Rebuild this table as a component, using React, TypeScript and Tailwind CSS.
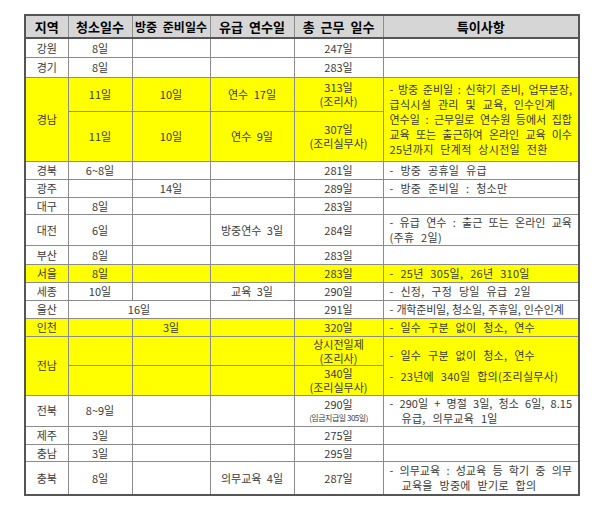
import React from "react";

const td = "border border-[#8c8c8c] text-center align-middle p-0 [word-spacing:3px]";
const y = "bg-[#ffff00]";

type Line = { t: string; j?: boolean; pl?: boolean; tight?: boolean };

function Note({ lines, lh = "leading-[15px]" }: { lines: Line[]; lh?: string }) {
  return (
    <div className={"px-[6px] " + lh}>
      {lines.map((l, i) => (
        <div
          key={i}
          className={
            (l.j
              ? "text-justify [text-align-last:justify] [word-spacing:0px] "
              : l.tight
              ? "text-left [word-spacing:1px] tracking-[-0.2px] "
              : "text-left [word-spacing:4px] tracking-[0.3px] ") +
            (l.pl ? "pl-[12px] " : "") +
            "whitespace-nowrap"
          }
        >
          {l.t}
        </div>
      ))}
    </div>
  );
}

export default function App() {
  return (
    <div
      className="w-[600px] h-[512px] bg-white pl-[24px] pt-[14px] text-[11px] text-[#3a3a3a]"
      style={{ fontFamily: '"Noto Sans CJK KR", "Noto Sans", sans-serif' }}
    >
      <table className="table-fixed border-collapse border-2 border-[#555] w-[554px]">
        <colgroup>
          <col className="w-[43px]" />
          <col className="w-[64px]" />
          <col className="w-[78px]" />
          <col className="w-[84px]" />
          <col className="w-[89px]" />
          <col className="w-[196px]" />
        </colgroup>
        <thead>
          <tr className="h-[23px] bg-[#d6d6d6] text-[13px] font-bold text-black">
            <th className={td + " border-b-2 border-b-[#555]"}>지역</th>
            <th className={td + " border-b-2 border-b-[#555]"}>청소일수</th>
            <th className={td + " border-b-2 border-b-[#555] text-[12px]"}>방중 준비일수</th>
            <th className={td + " border-b-2 border-b-[#555]"}>유급 연수일</th>
            <th className={td + " border-b-2 border-b-[#555]"}>총 근무 일수</th>
            <th className={td + " border-b-2 border-b-[#555]"}>특이사항</th>
          </tr>
        </thead>
        <tbody>
          <tr className="h-[19px]">
            <td className={td}>강원</td>
            <td className={td}>8일</td>
            <td className={td}></td>
            <td className={td}></td>
            <td className={td}>247일</td>
            <td className={td}></td>
          </tr>
          <tr className="h-[20px]">
            <td className={td}>경기</td>
            <td className={td}>8일</td>
            <td className={td}></td>
            <td className={td}></td>
            <td className={td}>283일</td>
            <td className={td}></td>
          </tr>
          <tr className={"h-[34px] " + y}>
            <td className={td} rowSpan={2}>경남</td>
            <td className={td}>11일</td>
            <td className={td}>10일</td>
            <td className={td}>연수 17일</td>
            <td className={td + " leading-[14px]"}>
              <div>313일</div>
              <div>(조리사)</div>
            </td>
            <td className={td} rowSpan={2}>
              <Note
                lines={[
                  { t: "- 방중 준비일 : 신학기 준비, 업무분장,", j: true },
                  { t: "급식시설 관리 및 교육, 인수인계" },
                  { t: "연수일 : 근무일로 연수원 등에서 집합", j: true },
                  { t: "교육 또는 출근하여 온라인 교육 이수", j: true },
                  { t: "25년까지 단계적 상시전일 전환" },
                ]}
              />
            </td>
          </tr>
          <tr className={"h-[50px] " + y}>
            <td className={td}>11일</td>
            <td className={td}>10일</td>
            <td className={td}>연수 9일</td>
            <td className={td + " leading-[14px]"}>
              <div>307일</div>
              <div>(조리실무사)</div>
            </td>
          </tr>
          <tr className="h-[18px]">
            <td className={td}>경북</td>
            <td className={td}>6~8일</td>
            <td className={td}></td>
            <td className={td}></td>
            <td className={td}>281일</td>
            <td className={td}>
              <Note lines={[{ t: "- 방중 공휴일 유급" }]} />
            </td>
          </tr>
          <tr className="h-[18px]">
            <td className={td}>광주</td>
            <td className={td}></td>
            <td className={td}>14일</td>
            <td className={td}></td>
            <td className={td}>289일</td>
            <td className={td}>
              <Note lines={[{ t: "- 방중 준비일 : 청소만" }]} />
            </td>
          </tr>
          <tr className="h-[17px]">
            <td className={td}>대구</td>
            <td className={td}>8일</td>
            <td className={td}></td>
            <td className={td}></td>
            <td className={td}>283일</td>
            <td className={td}></td>
          </tr>
          <tr className="h-[31px]">
            <td className={td}>대전</td>
            <td className={td}>6일</td>
            <td className={td}></td>
            <td className={td}>방중연수 3일</td>
            <td className={td}>284일</td>
            <td className={td}>
              <Note
                lines={[
                  { t: "- 유급 연수 : 출근 또는 온라인 교육", j: true },
                  { t: "(주휴 2일)" },
                ]}
              />
            </td>
          </tr>
          <tr className="h-[19px]">
            <td className={td}>부산</td>
            <td className={td}>8일</td>
            <td className={td}></td>
            <td className={td}></td>
            <td className={td}>283일</td>
            <td className={td}></td>
          </tr>
          <tr className={"h-[18px] " + y}>
            <td className={td}>서울</td>
            <td className={td}>8일</td>
            <td className={td}></td>
            <td className={td}></td>
            <td className={td}>283일</td>
            <td className={td}>
              <Note lines={[{ t: "- 25년 305일, 26년 310일" }]} />
            </td>
          </tr>
          <tr className="h-[16px]">
            <td className={td}>세종</td>
            <td className={td}>10일</td>
            <td className={td}></td>
            <td className={td}>교육 3일</td>
            <td className={td}>290일</td>
            <td className={td}>
              <Note lines={[{ t: "- 신정, 구정 당일 유급 2일" }]} />
            </td>
          </tr>
          <tr className="h-[18px]">
            <td className={td}>울산</td>
            <td className={td} colSpan={2}>16일</td>
            <td className={td}></td>
            <td className={td}>291일</td>
            <td className={td}>
              <Note lines={[{ t: "- 개학준비일, 청소일, 주휴일, 인수인계", tight: true }]} />
            </td>
          </tr>
          <tr className={"h-[18px] " + y}>
            <td className={td}>인천</td>
            <td className={td}></td>
            <td className={td}>3일</td>
            <td className={td}></td>
            <td className={td}>320일</td>
            <td className={td}>
              <Note lines={[{ t: "- 일수 구분 없이 청소, 연수" }]} />
            </td>
          </tr>
          <tr className={"h-[29px] " + y}>
            <td className={td} rowSpan={2}>전남</td>
            <td className={td}></td>
            <td className={td}></td>
            <td className={td}></td>
            <td className={td + " leading-[14px]"}>
              <div>상시전일제</div>
              <div>(조리사)</div>
            </td>
            <td className={td} rowSpan={2}>
              <Note
                lh="leading-[21px]"
                lines={[{ t: "- 일수 구분 없이 청소, 연수" }, { t: "- 23년에 340일 합의(조리실무사)" }]}
              />
            </td>
          </tr>
          <tr className={"h-[30px] " + y}>
            <td className={td}></td>
            <td className={td}></td>
            <td className={td}></td>
            <td className={td + " leading-[14px]"}>
              <div>340일</div>
              <div>(조리실무사)</div>
            </td>
          </tr>
          <tr className="h-[31px]">
            <td className={td}>전북</td>
            <td className={td}>8~9일</td>
            <td className={td}></td>
            <td className={td}></td>
            <td className={td + " leading-[14px]"}>
              <div>290일</div>
              <div className="text-[8px] tracking-[-0.5px] [word-spacing:0px]">(임금지급일 305일)</div>
            </td>
            <td className={td}>
              <Note
                lines={[
                  { t: "-  290일 + 명절 3일, 청소 6일, 8.15", j: true },
                  { t: "유급, 의무교육 1일", pl: true },
                ]}
              />
            </td>
          </tr>
          <tr className="h-[18px]">
            <td className={td}>제주</td>
            <td className={td}>3일</td>
            <td className={td}></td>
            <td className={td}></td>
            <td className={td}>275일</td>
            <td className={td}></td>
          </tr>
          <tr className="h-[17px]">
            <td className={td}>충남</td>
            <td className={td}>3일</td>
            <td className={td}></td>
            <td className={td}></td>
            <td className={td}>295일</td>
            <td className={td}></td>
          </tr>
          <tr className="h-[33px]">
            <td className={td}>충북</td>
            <td className={td}>8일</td>
            <td className={td}></td>
            <td className={td}>의무교육 4일</td>
            <td className={td}>287일</td>
            <td className={td}>
              <Note
                lines={[
                  { t: "- 의무교육 : 성교육 등 학기 중 의무", j: true },
                  { t: "교육을 방중에 받기로 합의", pl: true },
                ]}
              />
            </td>
          </tr>
        </tbody>
      </table>
    </div>
  );
}
